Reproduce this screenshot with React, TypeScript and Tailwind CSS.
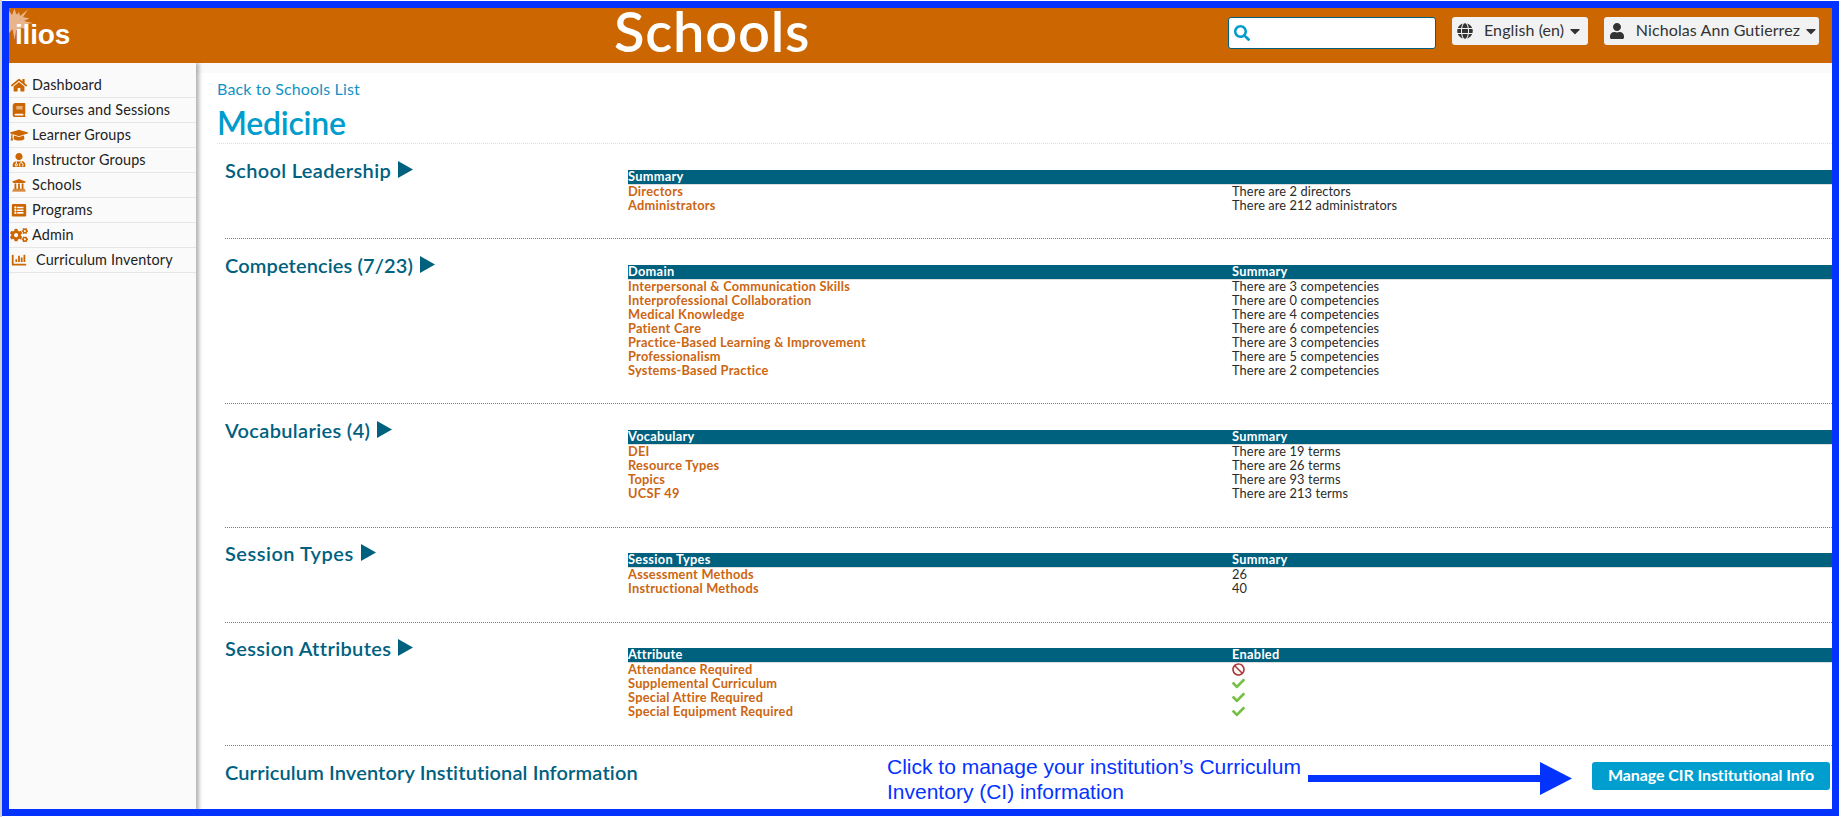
import type { ReactNode } from "react";
import type { IconType } from "react-icons";
import {
  FaBan,
  FaBook,
  FaCaretDown,
  FaChartBar,
  FaCheck,
  FaCogs,
  FaGlobe,
  FaGraduationCap,
  FaHome,
  FaListAlt,
  FaSearch,
  FaUniversity,
  FaUser,
  FaUserMd,
} from "react-icons/fa";

type NavItem = { label: string; icon: IconType; indent?: boolean };

const navItems: NavItem[] = [
  { label: "Dashboard", icon: FaHome },
  { label: "Courses and Sessions", icon: FaBook },
  { label: "Learner Groups", icon: FaGraduationCap },
  { label: "Instructor Groups", icon: FaUserMd },
  { label: "Schools", icon: FaUniversity },
  { label: "Programs", icon: FaListAlt },
  { label: "Admin", icon: FaCogs },
  { label: "Curriculum Inventory", icon: FaChartBar, indent: true },
];

type Section = {
  title: string;
  tracking: string;
  frame: string;
  columns: [string, string];
  rows: [string, string | boolean][];
};

const sections: Section[] = [
  {
    title: "School Leadership",
    tracking: "tracking-[0.35px]",
    frame: "h-[95px] pt-[26px]",
    columns: ["Summary", ""],
    rows: [
      ["Directors", "There are 2 directors"],
      ["Administrators", "There are 212 administrators"],
    ],
  },
  {
    title: "Competencies (7/23)",
    tracking: "tracking-[0.12px]",
    frame: "h-[165px] pt-[26px]",
    columns: ["Domain", "Summary"],
    rows: [
      ["Interpersonal & Communication Skills", "There are 3 competencies"],
      ["Interprofessional Collaboration", "There are 0 competencies"],
      ["Medical Knowledge", "There are 4 competencies"],
      ["Patient Care", "There are 6 competencies"],
      ["Practice-Based Learning & Improvement", "There are 3 competencies"],
      ["Professionalism", "There are 5 competencies"],
      ["Systems-Based Practice", "There are 2 competencies"],
    ],
  },
  {
    title: "Vocabularies (4)",
    tracking: "tracking-[0.35px]",
    frame: "h-[124px] pt-[26px]",
    columns: ["Vocabulary", "Summary"],
    rows: [
      ["DEI", "There are 19 terms"],
      ["Resource Types", "There are 26 terms"],
      ["Topics", "There are 93 terms"],
      ["UCSF 49", "There are 213 terms"],
    ],
  },
  {
    title: "Session Types",
    tracking: "tracking-[0.5px]",
    frame: "h-[95px] pt-[25px]",
    columns: ["Session Types", "Summary"],
    rows: [
      ["Assessment Methods", "26"],
      ["Instructional Methods", "40"],
    ],
  },
  {
    title: "Session Attributes",
    tracking: "tracking-[0.35px]",
    frame: "h-[123px] pt-[25px]",
    columns: ["Attribute", "Enabled"],
    rows: [
      ["Attendance Required", false],
      ["Supplemental Curriculum", true],
      ["Special Attire Required", true],
      ["Special Equipment Required", true],
    ],
  },
];

function Logo() {
  return (
    <div className="relative h-[55px] w-[80px] overflow-hidden">
      <svg className="absolute left-0 top-0" width="30" height="40" viewBox="9 8 30 40" fill="#e8b48c">
        <circle cx="15.500" cy="22" r="8" />
        <path d="M14.500 8.500L16.500 15L19 12L20 16L28 9.500L23 17L29.500 18.500L24 21L33 23L24 24.500L27 29L21 28L19 32L16.500 29L14.500 40L12.500 29L9 33V11L12 15z" />
      </svg>
      <span className="relative block pl-[6px] pt-[11px] font-['Liberation_Sans',sans-serif] text-[28px] font-bold leading-[32px] tracking-[-0.2px] text-white">
        ilios
      </span>
    </div>
  );
}

function HeaderButton({ className, icon, children }: { className: string; icon: ReactNode; children: ReactNode }) {
  return (
    <button className={`flex h-7 items-center rounded-[3px] bg-[#f2f2f2] pl-[5px] text-[16px] leading-5 text-[#333] ${className}`}>
      <span className="flex w-[27px] items-center">{icon}</span>
      <span className="whitespace-nowrap pb-[2px] tracking-[0.1px]">{children}</span>
      <FaCaretDown className="ml-[3px] size-[16px]" />
    </button>
  );
}

function Header() {
  return (
    <header className="flex h-[55px] shrink-0 items-start bg-[#cc6600]">
      <Logo />
      <h1 className="w-[1139px] pl-[525px] text-[56px] font-semibold leading-[46px] tracking-[0.8px] text-white">
        Schools
      </h1>
      <div className="mt-[9px] flex h-8 w-[208px] items-center rounded-[3px] border border-[#00617f] bg-white pl-[5px]">
        <FaSearch className="size-4 text-[#009dcc]" />
      </div>
      <HeaderButton className="ml-4 mt-[9px] w-[136px]" icon={<FaGlobe className="size-4" />}>
        English (en)
      </HeaderButton>
      <HeaderButton className="ml-4 mt-[9px] w-[215px]" icon={<FaUser className="size-4" />}>
        Nicholas Ann Gutierrez
      </HeaderButton>
    </header>
  );
}

function Sidebar() {
  return (
    <nav className="z-10 w-[187px] shrink-0 bg-[#fafafa] pt-[10px] shadow-[2px_1px_4px_1px_rgba(0,0,0,0.3)]">
      <ul>
        {navItems.map(({ label, icon: Icon, indent }) => (
          <li
            key={label}
            className="flex h-[25px] items-center border-b border-[#e6e6e6] pl-px text-[14.4px] leading-5 tracking-[0.15px] text-[#222]"
          >
            <Icon className="h-[14.4px] w-[18px] text-[#cc6600]" />
            <span className={indent ? "ml-2" : "ml-1"}>{label}</span>
          </li>
        ))}
      </ul>
    </nav>
  );
}

function Cell({ value }: { value: string | boolean }) {
  if (value === true) return <FaCheck className="size-[13px] text-[#76c043]" />;
  if (value === false) return <FaBan className="size-[13px] text-[#b03a3a]" />;
  return <>{value}</>;
}

function SectionBlock({ title, tracking, frame, columns, rows }: Section) {
  return (
    <section className={`ml-2 flex items-start border-b border-dotted border-[#cc6600] ${frame}`}>
      <h3 className={`-mt-[12px] flex w-[403px] shrink-0 items-center text-[20px] font-semibold leading-6 text-[#00617f] ${tracking}`}>
        {title}
        <svg className="mb-px ml-[7px]" width="15" height="17" viewBox="0 0 15 17" fill="currentColor">
          <path d="M0 0L15 8.500L0 17z" />
        </svg>
      </h3>
      <table className="w-full table-fixed border-collapse text-[12.8px] leading-[12px]">
        <colgroup>
          <col className="w-[604px]" />
          <col />
        </colgroup>
        <thead>
          <tr className="h-[14px] bg-[#00617f] text-left font-bold tracking-[0.3px] text-white">
            <th className="h-[14px] p-0 align-top">{columns[0]}</th>
            <th className="h-[14px] p-0 align-top">{columns[1]}</th>
          </tr>
          <tr className="bg-[#dddddd]">
            <td className="h-px p-0" colSpan={2} />
          </tr>
        </thead>
        <tbody>
          {rows.map(([name, value]) => (
            <tr key={name} className="h-[14px]">
              <td className="h-[14px] p-0 align-top font-bold tracking-[0.24px] text-[#cc6611]">{name}</td>
              <td className="h-[14px] p-0 align-top tracking-[0.1px] text-[#2a2a2a]">
                <Cell value={value} />
              </td>
            </tr>
          ))}
        </tbody>
      </table>
    </section>
  );
}

function Annotation() {
  return (
    <div className="absolute left-[885px] top-[754px] flex items-start text-[#0433ff]">
      <p className="w-[421px] whitespace-nowrap font-['Liberation_Sans',sans-serif] text-[21px] leading-[25px]">
        Click to manage your institution’s Curriculum
        <br />
        Inventory (CI) information
      </p>
      <svg className="mt-2" width="264" height="33" viewBox="0 0 264 33" fill="currentColor">
        <path d="M0 13H232V0L264 16.500L232 33V20H0z" />
      </svg>
    </div>
  );
}

export default function App() {
  return (
    <div className="relative h-[817px] w-[1841px] overflow-hidden border-l-2 border-[#cfcfcf] bg-white font-[Lato,sans-serif] [font-variant-ligatures:none]">
      <div className="flex h-[816px] w-[1837px] flex-col pb-[7px] pl-[7px] pr-[7px] pt-[8px]">
        <Header />
        <div className="flex min-h-0 flex-1 overflow-hidden">
          <Sidebar />
          <main className="min-w-0 flex-1">
            <div className="h-[10px] bg-[#fafafa]" />
            <div className="pl-[21px]">
              <a className="block pt-[6px] text-[16px] leading-5 tracking-[0.16px] text-[#1292c4]">Back to Schools List</a>
              <h2 className="h-[45px] border-b border-dotted border-[#dddddd] pt-[5px] text-[32px] font-semibold leading-[38px] tracking-[-0.25px] text-[#009dcc]">
                Medicine
              </h2>
              {sections.map((section) => (
                <SectionBlock key={section.title} {...section} />
              ))}
              <section className="ml-2 flex items-start justify-between pr-[2px] pt-[14px]">
                <h3 className="text-[20px] font-semibold leading-6 tracking-[0.13px] text-[#00617f]">
                  Curriculum Inventory Institutional Information
                </h3>
                <button className="mt-[2px] h-7 w-[238px] whitespace-nowrap rounded-[3px] bg-[#009dcf] pb-[2px] text-[16px] font-bold leading-6 tracking-[-0.08px] text-white">
                  Manage CIR Institutional Info
                </button>
              </section>
            </div>
          </main>
        </div>
      </div>
      <Annotation />
      <div className="pointer-events-none absolute left-0 top-px h-[815px] w-[1837px] border-[7px] border-[#0433ff]" />
    </div>
  );
}
